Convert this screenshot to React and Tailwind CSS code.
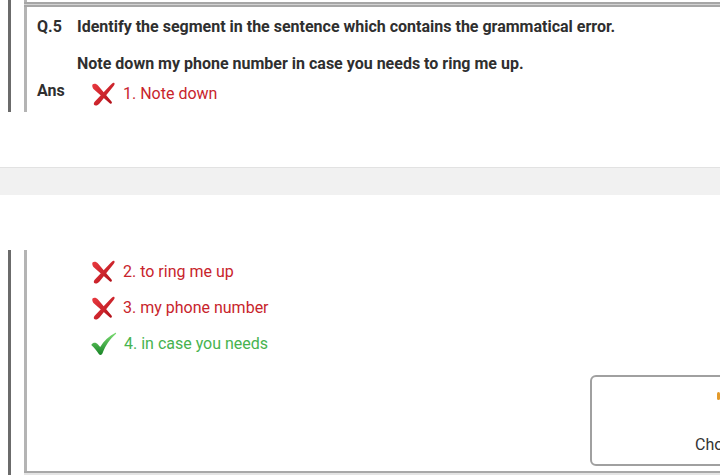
import React from 'react';

const font = { fontFamily: 'Roboto, "Noto Sans", sans-serif' };

const Cross = () => (
  <svg width="26" height="26" viewBox="0 0 26 26" className="shrink-0">
    <defs>
      <linearGradient id="xr" x1="0" y1="0" x2="1" y2="1">
        <stop offset="0" stopColor="#ea3a40" />
        <stop offset="1" stopColor="#b01019" />
      </linearGradient>
    </defs>
    <path d="M2.5 3.5 C4 2 6.5 2.6 8 4.5 L21.5 20.5 C22.5 21.8 21.6 23.4 20 22.6 L4 8.5 C2.6 7.2 1.8 5 2.5 3.5 Z" fill="url(#xr)" />
    <path d="M24 1.8 C25 2.4 24.7 3.8 23.6 5 L9.5 22.5 C8 24.5 5 25.3 4 23.8 C3.4 22.6 4.2 21.2 5.6 19.8 L20.5 4 C21.8 2.6 23 1.3 24 1.8 Z" fill="url(#xr)" />
  </svg>
);

const Check = () => (
  <svg width="27" height="24" viewBox="0 0 27 24" className="shrink-0">
    <defs>
      <linearGradient id="ck" x1="0" y1="0" x2="0" y2="1">
        <stop offset="0" stopColor="#7bdc72" />
        <stop offset="1" stopColor="#188426" />
      </linearGradient>
    </defs>
    <path d="M1.5 12.5 C3.2 10.2 6.2 10.4 8 12.5 L10.2 15 C14 8.8 19 4 25.5 0.8 C26.2 0.8 26.4 1.5 25.8 2 C19.8 7 15.8 13 12.4 21.6 C11.8 23.2 9.8 23.4 8.8 22 C6.5 18.6 4 15.6 2 13.8 C1.5 13.4 1.3 13 1.5 12.5 Z" fill="url(#ck)" />
  </svg>
);

const Option = ({ ok, children }) => (
  <div className="flex items-center gap-[7px] h-[36px] pl-[1px]">
    {ok ? <Check /> : <Cross />}
    <span className={`text-[16px] ${ok ? 'text-[#47b34f]' : 'text-[#c8242c]'}`}>{children}</span>
  </div>
);

const Rails = ({ children, className }) => (
  <div className={`flex ${className}`}>
    <div className="w-[8px] shrink-0" />
    <div className="w-[3px] shrink-0 bg-[#6b6b6b]" />
    <div className="w-[13px] shrink-0" />
    <div className="flex-1 min-w-0 border-l-[3px] border-[#b4b4b4] flex flex-col">{children}</div>
  </div>
);

export default function App() {
  return (
    <div className="w-[720px] h-[475px] overflow-hidden bg-white text-[#2f2f2f]" style={font}>
      <Rails className="h-[112px]">
        <div className="mt-[2px] h-[7px] border-y-[2px] border-[#a6a6a6] bg-[#d2d2d2] -ml-[3px]" />
        <div className="flex pl-[10px] pt-[8px]">
          <div className="w-[40px] font-bold text-[16px]">Q.5</div>
          <div className="flex flex-col">
            <div className="font-bold text-[16px] h-[22px]">Identify the segment in the sentence which contains the grammatical error.</div>
            <div className="font-bold text-[16px] mt-[15px] h-[22px]">Note down my phone number in case you needs to ring me up.</div>
          </div>
        </div>
        <div className="flex pl-[10px] mt-[2px]">
          <div className="w-[52px] font-bold text-[16px] pt-[3px]">Ans</div>
          <div>
            <Option>1. Note down</Option>
          </div>
        </div>
      </Rails>
      <div className="h-[55px]" />
      <div className="h-[28px] bg-[#f1f1f1] border-t border-[#e2e2e2]" />
      <div className="h-[55px]" />
      <Rails className="h-[225px]">
        <div className="flex-1 flex relative">
          <div className="flex flex-col pl-[62px] pt-[4px]">
            <Option>2. to ring me up</Option>
            <Option>3. my phone number</Option>
            <Option ok>4. in case you needs</Option>
          </div>
          <div className="absolute left-[563px] top-[125px] w-[160px] h-[91px] border-2 border-[#a0a0a0] rounded-[6px] flex flex-col items-start pl-[103px]">
            <div className="mt-[15px] ml-[22px] w-[3px] h-[8px] bg-[#e39a2a] rounded-sm" />
            <div className="mt-[33px] text-[16px] text-[#333]">Choose</div>
          </div>
        </div>
        <div className="h-[4px] border-t-2 border-[#a8a8a8] bg-[#e4e4e4] -ml-[3px]" />
      </Rails>
    </div>
  );
}
